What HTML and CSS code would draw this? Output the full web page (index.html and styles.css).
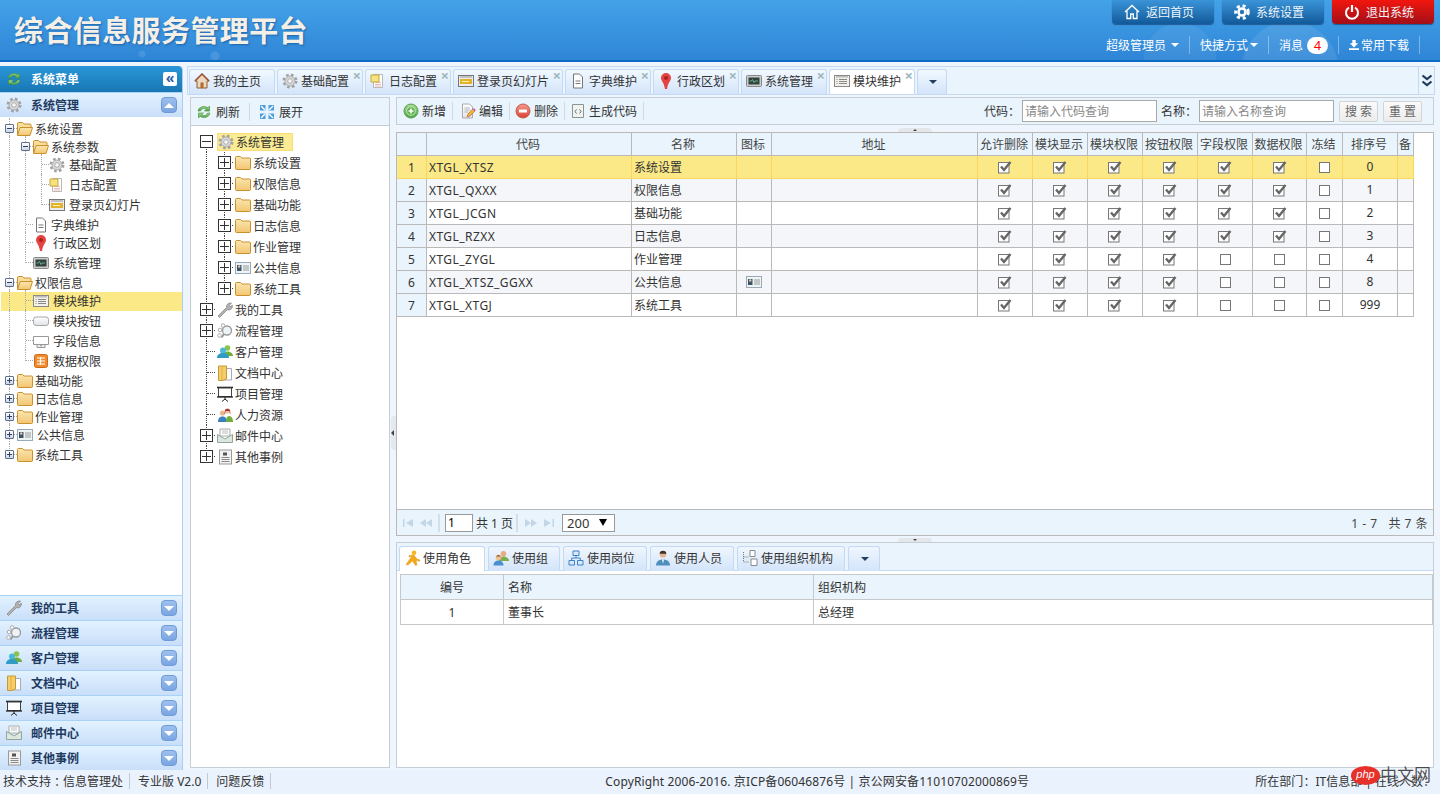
FILE: index.html
```html
<!DOCTYPE html>
<html lang="zh-CN">
<head>
  <meta charset="UTF-8">
  <meta name="viewport" content="width=device-width, initial-scale=1.0">
  <title>综合信息服务管理平台</title>
  <link rel="stylesheet" href="styles.css">
</head>
<body>
  <svg class="sprite" xmlns="http://www.w3.org/2000/svg">
    <defs>
      <linearGradient id="g-folder" x1="0" y1="0" x2="0" y2="1"><stop offset="0" stop-color="#fbe6b0"/><stop offset="1" stop-color="#f2c672"/></linearGradient>
      <linearGradient id="g-green" x1="0" y1="0" x2="0" y2="1"><stop offset="0" stop-color="#a6dc8e"/><stop offset="1" stop-color="#4ea645"/></linearGradient>
      <linearGradient id="g-red" x1="0" y1="0" x2="0" y2="1"><stop offset="0" stop-color="#f59a8e"/><stop offset="1" stop-color="#d8402f"/></linearGradient>
      <linearGradient id="g-paper" x1="0" y1="0" x2="0" y2="1"><stop offset="0" stop-color="#fff"/><stop offset="1" stop-color="#dfe3e8"/></linearGradient>
    </defs>
    <symbol id="i-gear" viewBox="0 0 16 16"><circle cx="8" cy="8" r="6.2" fill="none" stroke="#a3a3a3" stroke-width="2.6" stroke-dasharray="2.6 2.3"/><circle cx="8" cy="8" r="5" fill="#d8d8d8" stroke="#9a9a9a" stroke-width=".7"/><circle cx="8" cy="8" r="2.3" fill="#f7f7f7" stroke="#a0a0a0" stroke-width=".8"/></symbol>
    <symbol id="i-folder" viewBox="0 0 16 16"><path d="M.5 2.500a1 1 0 0 1 1-1h4l1.500 1.500h7.500a1 1 0 0 1 1 1v9.500a1 1 0 0 1-1 1h-13a1 1 0 0 1-1-1z" fill="url(#g-folder)" stroke="#c8912c"/></symbol>
    <symbol id="i-folder-open" viewBox="0 0 16 16"><path d="M.5 14V2.500a1 1 0 0 1 1-1h4l1.500 1.500h6a1 1 0 0 1 1 1v2" fill="#f8dd9c" stroke="#c8912c"/><path d="M.5 14.500l2.500-8h12.500l-2.500 8z" fill="url(#g-folder)" stroke="#c8912c"/></symbol>
    <symbol id="i-log" viewBox="0 0 16 16"><path d="M3.500 1.500h9v13h-9z" fill="#fff" stroke="#b9b9b9"/><path d="M5 9.500h6M5 11.500h6M5 13h6" stroke="#e9a9a9" stroke-width=".8"/><path d="M1 2h8v7H1z" fill="#f6e27f" stroke="#c7a93a"/></symbol>
    <symbol id="i-slide" viewBox="0 0 16 16"><rect x=".5" y="2.500" width="15" height="11" fill="#ececec" stroke="#777"/><rect x="2" y="6" width="12" height="5" fill="#e3b32c"/><path d="M2 4h12" stroke="#999"/><path d="M4 8.500h7" stroke="#fff2b0"/></symbol>
    <symbol id="i-doc" viewBox="0 0 16 16"><path d="M3.500 1h6l3 3v11h-9z" fill="#fff" stroke="#777"/><path d="M5.500 8h5M5.500 10.500h5" stroke="#777"/></symbol>
    <symbol id="i-pin" viewBox="0 0 16 16"><path d="M8 0a5 5 0 0 1 5 5c0 3-3 4-4 11H7C6 9 3 8 3 5a5 5 0 0 1 5-5z" fill="#e4443f"/><circle cx="8" cy="5" r="2" fill="#a92320"/></symbol>
    <symbol id="i-monitor" viewBox="0 0 16 16"><rect x=".5" y="2.500" width="15" height="11" rx="1" fill="#ccc" stroke="#888"/><rect x="2.500" y="4.500" width="11" height="7" fill="#33423f"/><path d="M3.500 8h2l1-1.500 1.500 3 1-1.500h3" fill="none" stroke="#7fd8a8" stroke-width=".7"/></symbol>
    <symbol id="i-list" viewBox="0 0 16 16"><rect x=".5" y="2.500" width="15" height="11" fill="#f2f0e8" stroke="#8a8a8a"/><path d="M2 3.800h12" stroke="#bbb" stroke-width="1.500"/><path d="M2.500 6.500h1M5 6.500h8M2.500 8.500h1M5 8.500h8M2.500 10.500h1M5 10.500h8" stroke="#888"/></symbol>
    <symbol id="i-button" viewBox="0 0 16 16"><rect x=".5" y="4" width="15" height="8.500" rx="2.500" fill="url(#g-paper)" stroke="#a8a8a8"/></symbol>
    <symbol id="i-field" viewBox="0 0 16 16"><path d="M.5 3.500h15v8h-15z" fill="#fff" stroke="#999"/><path d="M4 11.500h8v3H4z" fill="#eee" stroke="#999"/><path d="M7 12.500h2l-1 1z" fill="#444"/></symbol>
    <symbol id="i-data" viewBox="0 0 16 16"><rect x="1.500" y="1.500" width="13" height="13" rx="2" fill="#f08a2c" stroke="#cf6a16"/><path d="M4 5h8M4 8h8M4 11h8M7.500 4v8" stroke="#fff" stroke-width="1.200"/></symbol>
    <symbol id="i-card" viewBox="0 0 16 16"><rect x=".5" y="2.500" width="15" height="11" fill="#eef4f4" stroke="#9ab"/><rect x="2" y="5" width="4.500" height="6" fill="#3c5468"/><circle cx="4.200" cy="6.500" r="1.200" fill="#e9c9a8"/><path d="M8 6h6M8 8h6M8 10h6" stroke="#9a9a9a"/></symbol>
    <symbol id="i-wrench" viewBox="0 0 16 16"><path d="M1 14L9.500 5.500a3.800 3.800 0 0 1 5-4.300L12 3.500 13 5l2.300-1.800a3.800 3.800 0 0 1-5 4.500L2.500 15.500z" fill="#b4b4b4" stroke="#7c7c7c" stroke-width=".7"/></symbol>
    <symbol id="i-flow" viewBox="0 0 16 16"><circle cx="10" cy="7.500" r="4.500" fill="#edf3f7" stroke="#999" stroke-width="1.300"/><path d="M7 11l-2.500 3.500" stroke="#999" stroke-width="2"/><circle cx="3" cy="7" r="1.800" fill="#fff" stroke="#aaa"/><circle cx="6" cy="2.500" r="1.800" fill="#fff" stroke="#aaa"/><circle cx="2.500" cy="12.500" r="1.800" fill="#fff" stroke="#aaa"/></symbol>
    <symbol id="i-users" viewBox="0 0 16 16"><circle cx="10.500" cy="4" r="2.800" fill="#8bc34a"/><path d="M6 12c0-3 2-4.500 4.500-4.500S16 9 16 12z" fill="#6fae3c"/><circle cx="6" cy="6.500" r="3" fill="#4bb8d8"/><path d="M0 14c0-3.500 2.500-5 6-5s6 1.500 6 5z" fill="#2f9cc4"/></symbol>
    <symbol id="i-docs" viewBox="0 0 16 16"><path d="M6.500 3.500h8v11.500h-8z" fill="#fff" stroke="#aab"/><path d="M1.500 1h8v13l-4 1.500h-4z" fill="#f5cd6a" stroke="#c39a35"/><path d="M5 2v13" stroke="#e0ad40"/></symbol>
    <symbol id="i-proj" viewBox="0 0 16 16"><path d="M0 1.500h16" stroke="#222" stroke-width="1.600"/><rect x="1.500" y="2" width="13" height="8.500" fill="#fff" stroke="#444"/><path d="M0 11h16" stroke="#222" stroke-width="1.300"/><path d="M8 11v2M8 13l-3 2.500M8 13l3 2.500" stroke="#222"/></symbol>
    <symbol id="i-hr" viewBox="0 0 16 16"><circle cx="5.500" cy="6" r="2.600" fill="#e8b88c"/><path d="M1 15c0-4 2-5.500 4.500-5.500S10 11 10 15z" fill="#3a7fc0"/><circle cx="10.500" cy="4" r="2.600" fill="#f0c09a"/><path d="M8 3a3 3 0 0 1 5 0l.5 4H13l-.5-3h-4L8 7h-.5z" fill="#a33"/><path d="M9 15c0-4 1-6 3-6s4 2 4 6z" fill="#6fae3c"/></symbol>
    <symbol id="i-mail" viewBox="0 0 16 16"><path d="M3 1h10v7H3z" fill="#fff" stroke="#aaa"/><path d="M5 3h6M5 5h6" stroke="#bbb"/><path d="M.5 6.500L8 11l7.500-4.500v8h-15z" fill="#dbe8e0" stroke="#94a49a"/></symbol>
    <symbol id="i-news" viewBox="0 0 16 16"><rect x="2.500" y="1" width="12" height="14" fill="#f2f2f2" stroke="#999"/><rect x="6" y="3.500" width="4" height="3" fill="#555"/><path d="M4.500 8.500h8M4.500 10.500h8M4.500 12.500h8" stroke="#888"/></symbol>
    <symbol id="i-refresh" viewBox="0 0 16 16"><path d="M2 7a6 5 0 0 1 10-3.200L13.500 2v5h-5l1.700-1.700A3.500 3.500 0 0 0 4.500 7z" fill="url(#g-green)" stroke="#3f8c3a" stroke-width=".6"/><path d="M14 9A6 5 0 0 1 4 12.200L2.500 14V9h5l-1.700 1.700A3.500 3.500 0 0 0 11.500 9z" fill="url(#g-green)" stroke="#3f8c3a" stroke-width=".6"/></symbol>
    <symbol id="i-expand" viewBox="0 0 16 16"><path d="M1 1h5.500v5.500H1zM9.500 1H15v5.500H9.500zM1 9.500h5.500V15H1zM9.500 9.500H15V15H9.500z" fill="#4b9fdc"/><path d="M2 2l4 4M14 2l-4 4M2 14l4-4M14 14l-4-4" stroke="#fff" stroke-width="1.300"/></symbol>
    <symbol id="i-add" viewBox="0 0 16 16"><circle cx="8" cy="8" r="7" fill="url(#g-green)" stroke="#5a9e50"/><circle cx="8" cy="8" r="4.300" fill="#5fb24f" stroke="#d6efcb" stroke-width=".8"/><path d="M8 5.500v5M5.500 8h5" stroke="#fff" stroke-width="1.600"/></symbol>
    <symbol id="i-edit" viewBox="0 0 16 16"><path d="M2.500 1h7l3 3v11h-10z" fill="url(#g-paper)" stroke="#aaa"/><path d="M4.500 5h5M4.500 7h6M4.500 9h4" stroke="#b5b5b5"/><path d="M7 14l1-3 5-5 2 2-5 5z" fill="#e9b92e" stroke="#c4503a" stroke-width=".6"/><path d="M13 6l2 2 .8-1-2-2z" fill="#d84fc0"/></symbol>
    <symbol id="i-del" viewBox="0 0 16 16"><circle cx="8" cy="8" r="7" fill="url(#g-red)" stroke="#c55a4c"/><rect x="4" y="6.500" width="8" height="3" rx=".5" fill="#fff"/></symbol>
    <symbol id="i-code" viewBox="0 0 16 16"><path d="M2.500 1.500h11v13h-11z" fill="#f1f3f0" stroke="#8b9690"/><path d="M6.500 6.500L5 8.500l1.500 2M9.500 6.500l1.500 2-1.500 2" fill="none" stroke="#667"/></symbol>
    <symbol id="i-home" viewBox="0 0 16 16"><path d="M8 1L.8 8H3v7h10V8h2.200z" fill="#ead9bc" stroke="#8c5a33"/><path d="M1 8l7-7 7 7" fill="none" stroke="#9c4a32" stroke-width="1.500"/><rect x="6.500" y="9.500" width="3" height="5.500" fill="#b8662f"/></symbol>
    <symbol id="i-role" viewBox="0 0 16 16"><circle cx="9" cy="2.800" r="2.300" fill="#f5b71f"/><path d="M1 14.500L7 6l-3 1V5.500l5-.5 3 4 3 1-.5 1.300-3.500-1L12 15l-1.500.5-3-4.500-4.500 4z" fill="#f2a91a" stroke="#d98e10" stroke-width=".4"/></symbol>
    <symbol id="i-group" viewBox="0 0 16 16"><circle cx="10.500" cy="3.800" r="2.800" fill="#e5ae7f"/><path d="M6 11c0-3 2-4.500 4.500-4.500S16 8 16 11z" fill="#7cae4e"/><circle cx="5.500" cy="7.500" r="2.800" fill="#eebd92"/><path d="M3 6.500a2.800 2.800 0 0 1 5 0z" fill="#8c5a2d"/><path d="M.5 15.500c0-3.500 2-5 5-5s5 1.500 5 5z" fill="#4a90d0"/></symbol>
    <symbol id="i-org" viewBox="0 0 16 16"><path d="M5 1h6v4.500H5zM1 10.500h5.500V15H1zM9.500 10.500H15V15H9.500z" fill="#dbeafa" stroke="#3b82c8"/><path d="M8 5.500V8M3.700 10.500V8h8.600v2.500" fill="none" stroke="#3b82c8"/></symbol>
    <symbol id="i-user" viewBox="0 0 16 16"><circle cx="8" cy="4.200" r="3.300" fill="#e2b48c"/><path d="M4.700 4a3.300 3.300 0 0 1 6.600 0c-2 0-4.500-.5-6.600 0z" fill="#40302a"/><path d="M1 15.500c0-4 3-6 7-6s7 2 7 6z" fill="#4f8fbe"/><path d="M7 9.500h2l-1 4z" fill="#fff"/></symbol>
    <symbol id="i-orgdoc" viewBox="0 0 16 16"><path d="M1.500 2v10h6M1.500 7h6" fill="none" stroke="#777" stroke-dasharray="1 1"/><path d="M8 0.500h5v6H8zM9 9h6v6.500H9z" fill="#fff" stroke="#8a8a8a"/></symbol>
    <symbol id="i-check" viewBox="0 0 14 14"><rect x=".5" y="2.500" width="10.500" height="10.500" fill="#fff" stroke="#777"/><path d="M3 6.500l3 3.500L12.500 2" fill="none" stroke="#666" stroke-width="2.400"/></symbol>
    <symbol id="i-wgear" viewBox="0 0 16 16"><circle cx="8" cy="8" r="6.300" fill="none" stroke="#fff" stroke-width="3" stroke-dasharray="3 2.900"/><circle cx="8" cy="8" r="3.500" fill="none" stroke="#fff" stroke-width="2.600"/></symbol>
    <symbol id="i-whome" viewBox="0 0 16 16"><path d="M1 8l7-6.500L15 8M3 7v7.500h3.700v-4.500h2.600v4.500H13V7" fill="none" stroke="#fff" stroke-width="1.300"/></symbol>
    <symbol id="i-power" viewBox="0 0 16 16"><path d="M5 3.500a6 6 0 1 0 6 0" fill="none" stroke="#fff" stroke-width="2"/><path d="M8 1v7" stroke="#fff" stroke-width="2.200"/></symbol>
    <symbol id="i-down" viewBox="0 0 12 12"><path d="M4 0h4v4h3L6 9 1 4h3zM0 10h12v2H0z" fill="#fff"/></symbol>
    <symbol id="i-chev" viewBox="0 0 12 14"><path d="M1.500 1.500L6 5l4.500-3.500M1.500 7.500L6 11l4.500-3.500" fill="none" stroke="#1e3a5c" stroke-width="2.200"/></symbol>
    <symbol id="i-first" viewBox="0 0 12 8"><path d="M1 0h1.500v8H1zM11 0v8L4 4z" fill="#c3d6e8"/></symbol>
    <symbol id="i-prev" viewBox="0 0 12 8"><path d="M6 0v8L0 4zM12 0v8L6 4z" fill="#c3d6e8"/></symbol>
    <symbol id="i-next" viewBox="0 0 12 8"><path d="M0 0v8l6-4zM6 0v8l6-4z" fill="#c3d6e8"/></symbol>
    <symbol id="i-last" viewBox="0 0 12 8"><path d="M1 0v8l7-4zM9.500 0H11v8H9.500z" fill="#c3d6e8"/></symbol>
  </svg>

  <header class="top">
    <div class="brand">综合信息服务管理平台</div>
    <div class="top-right">
      <div class="top-btns">
        <a class="top-btn"><svg class="ic"><use href="#i-whome"/></svg>返回首页</a>
        <a class="top-btn"><svg class="ic"><use href="#i-wgear"/></svg>系统设置</a>
        <a class="top-btn red"><svg class="ic"><use href="#i-power"/></svg>退出系统</a>
      </div>
      <div class="top-nav">
        <a class="nav-item">超级管理员<i class="caret wide"></i></a>
        <a class="nav-item">快捷方式<i class="caret"></i></a>
        <a class="nav-item">消息<b class="badge">4</b></a>
        <a class="nav-item"><svg class="ic-dl"><use href="#i-down"/></svg>常用下载</a>
      </div>
    </div>
  </header>

  <main class="main">
    <aside class="side">
      <div class="side-title"><svg class="ic"><use href="#i-refresh"/></svg><span>系统菜单</span><i class="fold">«</i></div>
      <div class="acc"><svg class="ic"><use href="#i-gear"/></svg><span>系统管理</span><i class="acc-btn up"></i></div>
      <div class="side-tree">
        <div class="n"><i class="tw t"><b class="ex minus"></b></i><svg class="ic"><use href="#i-folder-open"/></svg><span>系统设置</span></div>
        <div class="n"><i class="tw v"></i><i class="tw t"><b class="ex minus"></b></i><svg class="ic"><use href="#i-folder-open"/></svg><span>系统参数</span></div>
        <div class="n leaf"><i class="tw v"></i><i class="tw v"></i><i class="tw t"></i><svg class="ic"><use href="#i-gear"/></svg><span>基础配置</span></div>
        <div class="n leaf tall"><i class="tw v"></i><i class="tw v"></i><i class="tw t"></i><svg class="ic"><use href="#i-log"/></svg><span>日志配置</span></div>
        <div class="n leaf tall"><i class="tw v"></i><i class="tw v"></i><i class="tw l"></i><svg class="ic"><use href="#i-slide"/></svg><span>登录页幻灯片</span></div>
        <div class="n tall"><i class="tw v"></i><i class="tw t"></i><svg class="ic"><use href="#i-doc"/></svg><span>字典维护</span></div>
        <div class="n leaf"><i class="tw v"></i><i class="tw t"></i><svg class="ic"><use href="#i-pin"/></svg><span>行政区划</span></div>
        <div class="n leaf tall"><i class="tw v"></i><i class="tw l"></i><svg class="ic"><use href="#i-monitor"/></svg><span>系统管理</span></div>
        <div class="n tall"><i class="tw t"><b class="ex minus"></b></i><svg class="ic"><use href="#i-folder-open"/></svg><span>权限信息</span></div>
        <div class="n leaf on"><i class="tw v"></i><i class="tw t"></i><svg class="ic"><use href="#i-list"/></svg><span>模块维护</span></div>
        <div class="n leaf tall"><i class="tw v"></i><i class="tw t"></i><svg class="ic"><use href="#i-button"/></svg><span>模块按钮</span></div>
        <div class="n leaf tall"><i class="tw v"></i><i class="tw t"></i><svg class="ic"><use href="#i-field"/></svg><span>字段信息</span></div>
        <div class="n leaf tall"><i class="tw v"></i><i class="tw l"></i><svg class="ic"><use href="#i-data"/></svg><span>数据权限</span></div>
        <div class="n tall"><i class="tw t"><b class="ex"></b></i><svg class="ic"><use href="#i-folder"/></svg><span>基础功能</span></div>
        <div class="n"><i class="tw t"><b class="ex"></b></i><svg class="ic"><use href="#i-folder"/></svg><span>日志信息</span></div>
        <div class="n"><i class="tw t"><b class="ex"></b></i><svg class="ic"><use href="#i-folder"/></svg><span>作业管理</span></div>
        <div class="n leaf"><i class="tw t"><b class="ex"></b></i><svg class="ic"><use href="#i-card"/></svg><span>公共信息</span></div>
        <div class="n tall"><i class="tw l"><b class="ex"></b></i><svg class="ic"><use href="#i-folder"/></svg><span>系统工具</span></div>
      </div>
      <div class="acc"><svg class="ic"><use href="#i-wrench"/></svg><span>我的工具</span><i class="acc-btn"></i></div>
      <div class="acc"><svg class="ic"><use href="#i-flow"/></svg><span>流程管理</span><i class="acc-btn"></i></div>
      <div class="acc"><svg class="ic"><use href="#i-users"/></svg><span>客户管理</span><i class="acc-btn"></i></div>
      <div class="acc"><svg class="ic"><use href="#i-docs"/></svg><span>文档中心</span><i class="acc-btn"></i></div>
      <div class="acc"><svg class="ic"><use href="#i-proj"/></svg><span>项目管理</span><i class="acc-btn"></i></div>
      <div class="acc"><svg class="ic"><use href="#i-mail"/></svg><span>邮件中心</span><i class="acc-btn"></i></div>
      <div class="acc"><svg class="ic"><use href="#i-news"/></svg><span>其他事例</span><i class="acc-btn"></i></div>
    </aside>

    <section class="work">
      <div class="tabbar">
        <a class="tab"><svg class="ic"><use href="#i-home"/></svg>我的主页</a>
        <a class="tab"><svg class="ic"><use href="#i-gear"/></svg>基础配置<i class="x">×</i></a>
        <a class="tab"><svg class="ic"><use href="#i-log"/></svg>日志配置<i class="x">×</i></a>
        <a class="tab"><svg class="ic"><use href="#i-slide"/></svg>登录页幻灯片<i class="x">×</i></a>
        <a class="tab"><svg class="ic"><use href="#i-doc"/></svg>字典维护<i class="x">×</i></a>
        <a class="tab"><svg class="ic"><use href="#i-pin"/></svg>行政区划<i class="x">×</i></a>
        <a class="tab"><svg class="ic"><use href="#i-monitor"/></svg>系统管理<i class="x">×</i></a>
        <a class="tab on"><svg class="ic"><use href="#i-list"/></svg>模块维护<i class="x">×</i></a>
        <a class="tab more"><i class="caret dark"></i></a>
        <i class="tab-scroll"><svg class="ic-chev"><use href="#i-chev"/></svg></i>
      </div>
      <div class="work-body">
        <div class="tree-panel">
          <div class="bar">
            <a class="tool"><svg class="ic"><use href="#i-refresh"/></svg>刷新</a>
            <a class="tool"><svg class="ic"><use href="#i-expand"/></svg>展开</a>
          </div>
          <div class="mtree">
            <div class="n"><i class="tw d"><b class="ex minus"></b></i><span class="sel-node"><svg class="ic"><use href="#i-gear"/></svg><span>系统管理</span></span></div>
            <div class="n"><i class="tw v"></i><i class="tw t"><b class="ex"></b></i><svg class="ic"><use href="#i-folder"/></svg><span>系统设置</span></div>
            <div class="n"><i class="tw v"></i><i class="tw t"><b class="ex"></b></i><svg class="ic"><use href="#i-folder"/></svg><span>权限信息</span></div>
            <div class="n"><i class="tw v"></i><i class="tw t"><b class="ex"></b></i><svg class="ic"><use href="#i-folder"/></svg><span>基础功能</span></div>
            <div class="n"><i class="tw v"></i><i class="tw t"><b class="ex"></b></i><svg class="ic"><use href="#i-folder"/></svg><span>日志信息</span></div>
            <div class="n"><i class="tw v"></i><i class="tw t"><b class="ex"></b></i><svg class="ic"><use href="#i-folder"/></svg><span>作业管理</span></div>
            <div class="n"><i class="tw v"></i><i class="tw t"><b class="ex"></b></i><svg class="ic"><use href="#i-card"/></svg><span>公共信息</span></div>
            <div class="n"><i class="tw v"></i><i class="tw l"><b class="ex"></b></i><svg class="ic"><use href="#i-folder"/></svg><span>系统工具</span></div>
            <div class="n"><i class="tw t"><b class="ex"></b></i><svg class="ic"><use href="#i-wrench"/></svg><span>我的工具</span></div>
            <div class="n"><i class="tw t"><b class="ex"></b></i><svg class="ic"><use href="#i-flow"/></svg><span>流程管理</span></div>
            <div class="n"><i class="tw t"></i><svg class="ic"><use href="#i-users"/></svg><span>客户管理</span></div>
            <div class="n"><i class="tw t"></i><svg class="ic"><use href="#i-docs"/></svg><span>文档中心</span></div>
            <div class="n"><i class="tw t"></i><svg class="ic"><use href="#i-proj"/></svg><span>项目管理</span></div>
            <div class="n"><i class="tw t"></i><svg class="ic"><use href="#i-hr"/></svg><span>人力资源</span></div>
            <div class="n"><i class="tw t"><b class="ex"></b></i><svg class="ic"><use href="#i-mail"/></svg><span>邮件中心</span></div>
            <div class="n"><i class="tw l"><b class="ex"></b></i><svg class="ic"><use href="#i-news"/></svg><span>其他事例</span></div>
          </div>
        </div>

        <div class="vsplit"><i class="vgrip"></i></div>

        <div class="content">
          <div class="bar main-bar">
            <a class="tool"><svg class="ic"><use href="#i-add"/></svg>新增</a>
            <a class="tool tight"><svg class="ic"><use href="#i-edit"/></svg>编辑</a>
            <a class="tool tight"><svg class="ic"><use href="#i-del"/></svg>删除</a>
            <a class="tool"><svg class="ic"><use href="#i-code"/></svg>生成代码</a>
            <form class="search">
              <label>代码<span class="colon">：</span></label><input type="text" placeholder="请输入代码查询">
              <label class="second">名称<span class="colon">：</span></label><input type="text" placeholder="请输入名称查询">
              <button type="button">搜 索</button>
              <button type="button">重 置</button>
            </form>
          </div>
          <div class="hsplit"><i class="hgrip"></i></div>

          <div class="grid">
            <div class="grid-scroll">
              <table class="dg">
                <colgroup>
                  <col class="c30"><col class="c205"><col class="c105"><col class="c35"><col class="c206">
                  <col class="c55"><col class="c55"><col class="c55"><col class="c55"><col class="c55"><col class="c54">
                  <col class="c36"><col class="c55"><col class="c16">
                </colgroup>
                <thead>
                  <tr><th></th><th>代码</th><th>名称</th><th>图标</th><th>地址</th><th>允许删除</th><th>模块显示</th><th>模块权限</th><th>按钮权限</th><th>字段权限</th><th>数据权限</th><th>冻结</th><th>排序号</th><th>备</th></tr>
                </thead>
                <tbody>
                  <tr class="on"><td class="no">1</td><td class="code">XTGL_XTSZ</td><td>系统设置</td><td></td><td></td><td class="m"><svg class="ck"><use href="#i-check"/></svg></td><td class="m"><svg class="ck"><use href="#i-check"/></svg></td><td class="m"><svg class="ck"><use href="#i-check"/></svg></td><td class="m"><svg class="ck"><use href="#i-check"/></svg></td><td class="m"><svg class="ck"><use href="#i-check"/></svg></td><td class="m"><svg class="ck"><use href="#i-check"/></svg></td><td class="m"><i class="unck"></i></td><td class="m">0</td><td></td></tr>
                  <tr class="alt"><td class="no">2</td><td class="code">XTGL_QXXX</td><td>权限信息</td><td></td><td></td><td class="m"><svg class="ck"><use href="#i-check"/></svg></td><td class="m"><svg class="ck"><use href="#i-check"/></svg></td><td class="m"><svg class="ck"><use href="#i-check"/></svg></td><td class="m"><svg class="ck"><use href="#i-check"/></svg></td><td class="m"><svg class="ck"><use href="#i-check"/></svg></td><td class="m"><svg class="ck"><use href="#i-check"/></svg></td><td class="m"><i class="unck"></i></td><td class="m">1</td><td></td></tr>
                  <tr><td class="no">3</td><td class="code">XTGL_JCGN</td><td>基础功能</td><td></td><td></td><td class="m"><svg class="ck"><use href="#i-check"/></svg></td><td class="m"><svg class="ck"><use href="#i-check"/></svg></td><td class="m"><svg class="ck"><use href="#i-check"/></svg></td><td class="m"><svg class="ck"><use href="#i-check"/></svg></td><td class="m"><svg class="ck"><use href="#i-check"/></svg></td><td class="m"><svg class="ck"><use href="#i-check"/></svg></td><td class="m"><i class="unck"></i></td><td class="m">2</td><td></td></tr>
                  <tr class="alt"><td class="no">4</td><td class="code">XTGL_RZXX</td><td>日志信息</td><td></td><td></td><td class="m"><svg class="ck"><use href="#i-check"/></svg></td><td class="m"><svg class="ck"><use href="#i-check"/></svg></td><td class="m"><svg class="ck"><use href="#i-check"/></svg></td><td class="m"><svg class="ck"><use href="#i-check"/></svg></td><td class="m"><svg class="ck"><use href="#i-check"/></svg></td><td class="m"><svg class="ck"><use href="#i-check"/></svg></td><td class="m"><i class="unck"></i></td><td class="m">3</td><td></td></tr>
                  <tr><td class="no">5</td><td class="code">XTGL_ZYGL</td><td>作业管理</td><td></td><td></td><td class="m"><svg class="ck"><use href="#i-check"/></svg></td><td class="m"><svg class="ck"><use href="#i-check"/></svg></td><td class="m"><svg class="ck"><use href="#i-check"/></svg></td><td class="m"><svg class="ck"><use href="#i-check"/></svg></td><td class="m"><i class="unck"></i></td><td class="m"><i class="unck"></i></td><td class="m"><i class="unck"></i></td><td class="m">4</td><td></td></tr>
                  <tr class="alt"><td class="no">6</td><td class="code">XTGL_XTSZ_GGXX</td><td>公共信息</td><td class="m"><svg class="ic"><use href="#i-card"/></svg></td><td></td><td class="m"><svg class="ck"><use href="#i-check"/></svg></td><td class="m"><svg class="ck"><use href="#i-check"/></svg></td><td class="m"><svg class="ck"><use href="#i-check"/></svg></td><td class="m"><svg class="ck"><use href="#i-check"/></svg></td><td class="m"><i class="unck"></i></td><td class="m"><i class="unck"></i></td><td class="m"><i class="unck"></i></td><td class="m">8</td><td></td></tr>
                  <tr><td class="no">7</td><td class="code">XTGL_XTGJ</td><td>系统工具</td><td></td><td></td><td class="m"><svg class="ck"><use href="#i-check"/></svg></td><td class="m"><svg class="ck"><use href="#i-check"/></svg></td><td class="m"><svg class="ck"><use href="#i-check"/></svg></td><td class="m"><svg class="ck"><use href="#i-check"/></svg></td><td class="m"><i class="unck"></i></td><td class="m"><i class="unck"></i></td><td class="m"><i class="unck"></i></td><td class="m">999</td><td></td></tr>
                </tbody>
              </table>
            </div>
            <div class="pager">
              <svg class="pg"><use href="#i-first"/></svg>
              <svg class="pg"><use href="#i-prev"/></svg>
              <i class="pg-sep"></i>
              <input class="pg-input" type="text" value="1">
              <span class="pg-text">共 1 页</span>
              <i class="pg-sep"></i>
              <svg class="pg"><use href="#i-next"/></svg>
              <svg class="pg"><use href="#i-last"/></svg>
              <div class="pg-size">200<i class="caret black"></i></div>
              <span class="pg-info">1 - 7 &nbsp;&nbsp;共 7 条</span>
            </div>
          </div>

          <div class="hsplit low"><i class="hgrip"></i></div>

          <div class="detail">
            <div class="subtabs">
              <a class="subtab on"><svg class="ic"><use href="#i-role"/></svg>使用角色</a>
              <a class="subtab"><svg class="ic"><use href="#i-group"/></svg>使用组</a>
              <a class="subtab"><svg class="ic"><use href="#i-org"/></svg>使用岗位</a>
              <a class="subtab"><svg class="ic"><use href="#i-user"/></svg>使用人员</a>
              <a class="subtab"><svg class="ic"><use href="#i-orgdoc"/></svg>使用组织机构</a>
              <a class="subtab more"><i class="caret dark"></i></a>
            </div>
            <table class="sub-dg">
              <colgroup><col class="s1"><col class="s2"><col></colgroup>
              <thead><tr><th class="m">编号</th><th>名称</th><th>组织机构</th></tr></thead>
              <tbody><tr><td class="m">1</td><td>董事长</td><td>总经理</td></tr></tbody>
            </table>
          </div>
        </div>
      </div>
    </section>
  </main>

  <footer class="foot">
    <span class="foot-cell">技术支持<span class="colon">：</span>信息管理处</span>
    <span class="foot-cell">专业版 V2.0</span>
    <span class="foot-cell">问题反馈</span>
    <span class="foot-copy">CopyRight 2006-2016. 京ICP备06046876号 | 京公网安备11010702000869号</span>
    <span class="foot-right">所在部门<span class="colon">：</span>IT信息部 | 在线人数<span class="colon">：</span></span>
  </footer>

  <div class="watermark"><i class="wm-php">php</i><span class="wm-cn">中文网</span></div>
</body>
</html>
```

FILE: styles.css
```css
html, body {
  margin: 0;
  padding: 0;
  height: 100%;
  overflow: hidden;
}

body {
  position: relative;
  display: flex;
  flex-direction: column;
  width: 1440px;
  height: 794px;
  font-family: "Noto Sans", "Noto Sans CJK SC", sans-serif;
  font-size: 12px;
  color: #333;
  background: #eef5fd;
}

i { font-style: normal; }
a { color: inherit; text-decoration: none; }

.sprite {
  position: absolute;
  width: 0;
  height: 0;
}

.ic {
  width: 16px;
  height: 16px;
  flex: none;
}

/* centered full-width colon, the SC face puts it bottom-left */
.colon { font-family: "Noto Sans CJK TC", sans-serif; }

/* header */
.top {
  display: flex;
  justify-content: space-between;
  flex: none;
  box-sizing: border-box;
  height: 62px;
  border-bottom: 2px solid #0b6cc3;
  background:
    radial-gradient(circle at 1290px 70px, rgba(255, 255, 255, .09) 0 48px, transparent 49px),
    radial-gradient(circle at 1180px 60px, rgba(255, 255, 255, .06) 0 36px, transparent 37px),
    radial-gradient(circle at 215px 56px, rgba(255, 255, 255, .12) 0 4px, transparent 5px),
    radial-gradient(circle at 142px 54px, rgba(255, 255, 255, .1) 0 3px, transparent 4px),
    linear-gradient(#43a2e8, #2f85d6);
}

.brand {
  padding: 13px 0 0 14px;
  font-size: 29px;
  line-height: 36px;
  font-weight: 700;
  letter-spacing: .4px;
  color: #f4f0e8;
  text-shadow: 1px 1px 2px rgba(20, 70, 130, .6);
}

.top-right {
  display: flex;
  flex-direction: column;
  align-items: flex-end;
}

.top-btns {
  display: flex;
  gap: 8px;
  padding-right: 6px;
}

.top-btn {
  display: flex;
  align-items: center;
  gap: 6px;
  box-sizing: border-box;
  width: 102px;
  height: 24px;
  padding-left: 12px;
  border-radius: 0 0 4px 4px;
  color: #eef4fa;
  background: linear-gradient(#3a94d8, #125a9a);
  box-shadow: 0 1px 1px rgba(10, 50, 100, .6);
}

.top-btn.red { background: linear-gradient(#f2160d, #a20f18); }

.top-nav {
  display: flex;
  align-items: center;
  height: 18px;
  margin-top: 12px;
  padding-right: 20px;
  color: #fff;
}

.nav-item {
  display: flex;
  align-items: center;
  height: 18px;
  padding: 0 10px;
  border-right: 1px solid rgba(255, 255, 255, .35);
}

.caret {
  width: 0;
  height: 0;
  margin-left: 2px;
  border: 4px solid transparent;
  border-top-color: #fff;
  border-bottom-width: 0;
}

.caret.wide { margin-left: 5px; }
.caret.dark { border-top-color: #25405f; }
.caret.black { border-top-color: #000; border-top-width: 7px; margin-left: auto; }

.badge {
  width: 21px;
  height: 17px;
  margin-left: 4px;
  border-radius: 9px;
  background: #fff;
  color: #f00;
  font-size: 13px;
  font-weight: 400;
  line-height: 17px;
  text-align: center;
}

.ic-dl {
  width: 10px;
  height: 10px;
  margin-right: 2px;
}

/* main area */
.main {
  display: flex;
  flex: 1;
  min-height: 0;
  padding-top: 4px;
}

.side {
  display: flex;
  flex-direction: column;
  flex: none;
  box-sizing: border-box;
  width: 183px;
  border-right: 1px solid #a9cdf5;
  border-radius: 0 4px 0 0;
  background: #fff;
}

.side-title {
  display: flex;
  align-items: center;
  flex: none;
  height: 26px;
  padding: 0 5px 0 6px;
  border-radius: 0 4px 0 0;
  color: #fff;
  font-weight: 700;
  background: linear-gradient(#2a97d8, #1877b4);
}

.side-title span { margin-left: 9px; }

.fold {
  width: 14px;
  height: 14px;
  margin-left: auto;
  border-radius: 2px;
  background: #fff;
  color: #2c5fa6;
  font-size: 14px;
  font-weight: 700;
  line-height: 11px;
  text-align: center;
}

.acc {
  display: flex;
  align-items: center;
  flex: none;
  box-sizing: border-box;
  height: 25px;
  padding: 0 5px 0 6px;
  border-top: 1px solid #a9d2f7;
  color: #1f3a5f;
  font-weight: 700;
  background: linear-gradient(#e2f2ff, #c9def9);
}

.acc span { margin-left: 9px; }

.acc-btn {
  display: flex;
  align-items: center;
  justify-content: center;
  width: 16px;
  height: 16px;
  margin-left: auto;
  border: 1px solid #6f9bd6;
  border-radius: 4px;
  box-sizing: border-box;
  background: linear-gradient(#9fc0ee, #7aa5e2);
}

.acc-btn::after {
  content: "";
  border: 5px solid transparent;
  border-top-color: #fff;
  border-bottom-width: 0;
}

.acc-btn.up::after {
  border-top-width: 0;
  border-top-color: transparent;
  border-bottom: 5px solid #fff;
}

/* tree rows */
.n {
  display: flex;
  align-items: center;
  box-sizing: border-box;
  height: 18px;
  white-space: nowrap;
}

.n.tall {
  height: 20px;
  padding-top: 2px;
}

.n > span { margin-left: 2px; color: #333; }
.n.leaf > span { margin-left: 4px; }

.tw {
  position: relative;
  flex: none;
  align-self: stretch;
  width: 16px;
}

.tw.v::before, .tw.t::before, .tw.l::before, .tw.d::before {
  content: "";
  position: absolute;
  left: 8px;
  top: -2px;
  bottom: 0;
  border-left: 1px dotted #aaa;
}

.tw.l::before { bottom: 9px; }

.tw.t::after, .tw.l::after {
  content: "";
  position: absolute;
  left: 9px;
  right: 0;
  bottom: 9px;
  border-top: 1px dotted #aaa;
}

.ex {
  position: absolute;
  z-index: 1;
  left: 4px;
  bottom: 5px;
  box-sizing: border-box;
  width: 9px;
  height: 9px;
  border: 1px solid #5f6f8c;
  border-radius: 1px;
  background:
    linear-gradient(#33415c, #33415c) center / 5px 1px no-repeat,
    linear-gradient(#33415c, #33415c) center / 1px 5px no-repeat,
    linear-gradient(#fff, #c9d5ea);
}

.ex.minus {
  background:
    linear-gradient(#33415c, #33415c) center / 5px 1px no-repeat,
    linear-gradient(#fff, #c9d5ea);
}

.side-tree {
  flex: 1;
  min-height: 0;
  padding: 3px 0 0 1px;
}

.side-tree .n.on {
  background: #fbe987;
  box-shadow: 0 1px 0 #fbe987;
}

/* work area */
.work {
  display: flex;
  flex-direction: column;
  flex: none;
  width: 1248px;
  margin-left: 4px;
}

.tabbar {
  display: flex;
  align-items: flex-end;
  gap: 2px;
  flex: none;
  box-sizing: border-box;
  height: 29px;
  padding-left: 1px;
  border: 1px solid #c5d9f5;
  background: #e9f4fc;
}

.tab {
  position: relative;
  display: flex;
  align-items: center;
  gap: 3px;
  box-sizing: border-box;
  height: 25px;
  padding: 0 13px 2px 4px;
  border: 1px solid #c5d9f5;
  border-bottom: 0;
  border-radius: 3px 3px 0 0;
  background: linear-gradient(#f1f8ff, #d3e4fa);
}

.tab.on { background: #fff; }
.tab.more { padding: 0 9px; }

.x {
  position: absolute;
  top: -3px;
  right: 1px;
  color: #9fb9c0;
  font-size: 15px;
  font-weight: 700;
  line-height: 16px;
}

.tab-scroll {
  display: flex;
  align-items: center;
  justify-content: center;
  align-self: stretch;
  width: 15px;
  margin-left: auto;
  border-left: 1px solid #c5d9f5;
}

.ic-chev {
  width: 12px;
  height: 14px;
}

.work-body {
  display: flex;
  flex: 1;
  min-height: 0;
  padding: 2px 1px 2px 3px;
}

.tree-panel {
  display: flex;
  flex-direction: column;
  flex: none;
  box-sizing: border-box;
  width: 200px;
  border: 1px solid #c5ced6;
  background: #fff;
}

.bar {
  display: flex;
  align-items: center;
  flex: none;
  box-sizing: border-box;
  height: 28px;
  padding-left: 5px;
  border-bottom: 1px solid #c5ced6;
  background: #e9f4fc;
}

.tool {
  display: flex;
  align-items: center;
  gap: 3px;
  height: 18px;
  padding-right: 6px;
  margin-right: 7px;
  border-right: 1px solid #cfd9e2;
}

.main-bar .tool.tight { margin-right: 5px; }

.tree-panel .tool {
  gap: 4px;
  padding-right: 9px;
  margin-right: 9px;
}

.tree-panel .tool:last-child { border-right: 0; }

.mtree {
  flex: 1;
  padding: 5px 0 0 6px;
}

.mtree .n { height: 21px; }
.mtree .n > span { margin-left: 2px; }
.mtree .n > .ic { margin-left: 2px; }

.mtree .tw { width: 18px; }

.mtree .tw.v::before, .mtree .tw.t::before, .mtree .tw.l::before, .mtree .tw.d::before {
  left: 9px;
  top: 0;
  border-left-color: #444;
}

.mtree .tw.d::before { top: 10px; }
.mtree .tw.l::before { bottom: 10px; }

.mtree .tw.t::after, .mtree .tw.l::after {
  left: 10px;
  bottom: 10px;
  border-top-color: #444;
}

.mtree .ex {
  left: 3px;
  bottom: 4px;
  width: 13px;
  height: 13px;
  border: 1px solid #333;
  border-radius: 0;
  background:
    linear-gradient(#333, #333) center / 9px 1px no-repeat,
    linear-gradient(#333, #333) center / 1px 9px no-repeat,
    #fff;
}

.mtree .ex.minus {
  background:
    linear-gradient(#333, #333) center / 9px 1px no-repeat,
    #fff;
}

.sel-node {
  display: flex;
  align-items: center;
  gap: 2px;
  box-sizing: border-box;
  height: 18px;
  padding-right: 8px;
  border: 1px solid #f9dc74;
  background: #fbec94;
}

.vsplit {
  display: flex;
  align-items: center;
  justify-content: flex-end;
  flex: none;
  width: 6px;
}

.vgrip {
  position: relative;
  width: 5px;
  height: 34px;
  border-radius: 4px 0 0 4px;
  background: #e3e9ee;
}

.vgrip::after {
  content: "";
  position: absolute;
  top: 14px;
  left: 0;
  border: 3px solid transparent;
  border-right-color: #444;
  border-left-width: 0;
}

.content {
  display: flex;
  flex-direction: column;
  flex: 1;
  min-width: 0;
}

.main-bar {
  border: 1px solid #c5ced6;
  padding-left: 6px;
}

.search {
  display: flex;
  align-items: center;
  margin: 0 0 0 auto;
  padding-right: 11px;
}

.search label { color: #333; }
.search .second { margin-left: 4px; }

.search input {
  box-sizing: border-box;
  width: 135px;
  height: 22px;
  margin-left: 2px;
  padding: 0 2px;
  border: 1px solid #a9a9a9;
  background: #fff;
  font: inherit;
  outline: 0;
}

.search input::placeholder { color: #888; }

.search button {
  width: 39px;
  height: 21px;
  margin-left: 5px;
  padding: 0;
  border: 1px solid #d4d4d4;
  border-radius: 2px;
  color: #666;
  font: inherit;
  background: linear-gradient(#fafafa, #ececec);
}

.hsplit {
  display: flex;
  justify-content: center;
  align-items: flex-end;
  flex: none;
  height: 7px;
}

.hsplit.low { height: 6px; }

.hgrip {
  position: relative;
  width: 34px;
  height: 4px;
  border-radius: 4px 4px 0 0;
  background: #e3e7ea;
}

.hgrip::after {
  content: "";
  position: absolute;
  left: 15px;
  top: 1px;
  border: 2px solid transparent;
  border-bottom-color: #444;
  border-top-width: 0;
}

.low .hgrip::after {
  border-bottom-width: 0;
  border-top: 2px solid #444;
}

.grid {
  display: flex;
  flex-direction: column;
  flex: 1;
  min-height: 0;
  border: 1px solid #b9b9b9;
  background: #fff;
}

.grid-scroll {
  flex: 1;
  min-height: 0;
  overflow: hidden;
}

.dg {
  table-layout: fixed;
  width: 1017px;
  border-collapse: separate;
  border-spacing: 0;
}

.c30 { width: 30px; }
.c205 { width: 205px; }
.c105 { width: 105px; }
.c35 { width: 35px; }
.c206 { width: 206px; }
.c55 { width: 55px; }
.c54 { width: 54px; }
.c36 { width: 36px; }
.c16 { width: 16px; }

.dg th, .dg td {
  box-sizing: border-box;
  height: 23px;
  padding: 2px 2px 0;
  border-right: 1px solid #b9b9b9;
  border-bottom: 1px solid #b9b9b9;
  overflow: hidden;
  font-weight: 400;
  white-space: nowrap;
}

.dg th {
  padding: 0 3px 0 1px;
  color: #444;
  background: #e9f4fc;
  text-align: center;
}

.dg td { line-height: 16px; }
.dg td.code { letter-spacing: .45px; }
.dg .m { text-align: center; padding: 0; }

.dg .no {
  padding: 2px 2px 0;
  background: #e9f4fc;
  text-align: center;
}

.dg tr.alt td { background: #f4f6f9; }
.dg tr.alt td.no { background: #e9f4fc; }

.dg tr.on td {
  background: #fbe987;
  border-color: #f9d65c;
}

.ck {
  display: block;
  width: 14px;
  height: 14px;
  margin: 0 auto;
}

.unck {
  display: block;
  box-sizing: border-box;
  width: 11px;
  height: 11px;
  margin: 0 auto;
  border: 1px solid #777;
  background: #fff;
}

.dg .ic { display: block; margin: 0 auto; }

.pager {
  display: flex;
  align-items: center;
  flex: none;
  box-sizing: border-box;
  height: 26px;
  padding: 0 5px 0 5px;
  border-top: 1px solid #b9b9b9;
  background: #e9f4fc;
}

.pg {
  flex: none;
  width: 12px;
  height: 8px;
  margin-right: 6px;
}

.pg-sep {
  flex: none;
  width: 2px;
  height: 18px;
  margin: 0 3px 0 0;
  background: #d3dee8;
}

.pg-input {
  box-sizing: border-box;
  width: 28px;
  height: 18px;
  margin-left: 2px;
  padding: 0 2px;
  border: 1px solid #999;
  font: inherit;
  outline: 0;
}

.pg-text { margin: 0 3px; }
.pager .pg-text + .pg-sep { margin-right: 7px; }
.pager .pg-text + .pg-sep + .pg + .pg { margin-right: 7px; }

.pg-size {
  display: flex;
  align-items: center;
  box-sizing: border-box;
  width: 53px;
  height: 18px;
  padding: 0 7px 0 4px;
  border: 1px solid #999;
  background: #fff;
  font-size: 13px;
}

.pg-info {
  margin-left: auto;
  letter-spacing: .5px;
  color: #444;
}

.detail {
  display: flex;
  flex-direction: column;
  flex: none;
  box-sizing: border-box;
  height: 226px;
  border: 1px solid #c5ced6;
  background: #fff;
}

.subtabs {
  display: flex;
  align-items: flex-end;
  gap: 3px;
  flex: none;
  box-sizing: border-box;
  height: 28px;
  padding-left: 2px;
  border-bottom: 1px solid #c5d9f5;
  background: #e9f4fc;
}

.subtab {
  display: flex;
  align-items: center;
  gap: 3px;
  box-sizing: border-box;
  height: 25px;
  margin-bottom: -1px;
  padding: 0 11px 2px 4px;
  border: 1px solid #c5d9f5;
  border-bottom: 0;
  border-radius: 3px 3px 0 0;
  background: linear-gradient(#eff6fe, #d3e4fa);
}

.subtab.on {
  padding: 0 13px 2px 5px;
  gap: 2px;
  background: #fff;
}

.subtab.more { padding: 0 10px; }

.sub-dg {
  table-layout: fixed;
  width: calc(100% - 3px);
  margin: 3px 0 0 3px;
  border-collapse: separate;
  border-spacing: 0;
  border-top: 1px solid #c8c8c8;
  border-left: 1px solid #c8c8c8;
}

.s1 { width: 103px; }
.s2 { width: 310px; }

.sub-dg th, .sub-dg td {
  box-sizing: border-box;
  height: 25px;
  padding: 0 4px;
  border-right: 1px solid #c8c8c8;
  border-bottom: 1px solid #c8c8c8;
  font-weight: 400;
  text-align: left;
}

.sub-dg th { background: #e9f4fc; }
.sub-dg .m { text-align: center; }

/* footer */
.foot {
  display: flex;
  align-items: center;
  flex: none;
  box-sizing: border-box;
  height: 24px;
  padding: 0 5px 2px 3px;
  background: #eaf2fd;
}

.foot-cell {
  display: flex;
  align-items: center;
  height: 16px;
  padding-right: 6px;
  margin-right: 8px;
  border-right: 1px solid #c2c9d2;
}

.foot-copy {
  margin-left: 326px;
  letter-spacing: .12px;
}

.foot-right { margin-left: auto; }

.watermark {
  position: absolute;
  right: 9px;
  bottom: 9px;
  display: flex;
  align-items: center;
}

.wm-php {
  width: 29px;
  height: 19px;
  border-radius: 50%;
  background: #e8302a;
  color: #fff;
  font-family: "Liberation Sans", sans-serif;
  font-size: 11px;
  font-style: italic;
  line-height: 17px;
  text-align: center;
}

.wm-cn {
  font-size: 17px;
  line-height: 20px;
  color: rgba(30, 30, 30, .8);
  text-shadow: 0 0 2px #fff;
}
```
